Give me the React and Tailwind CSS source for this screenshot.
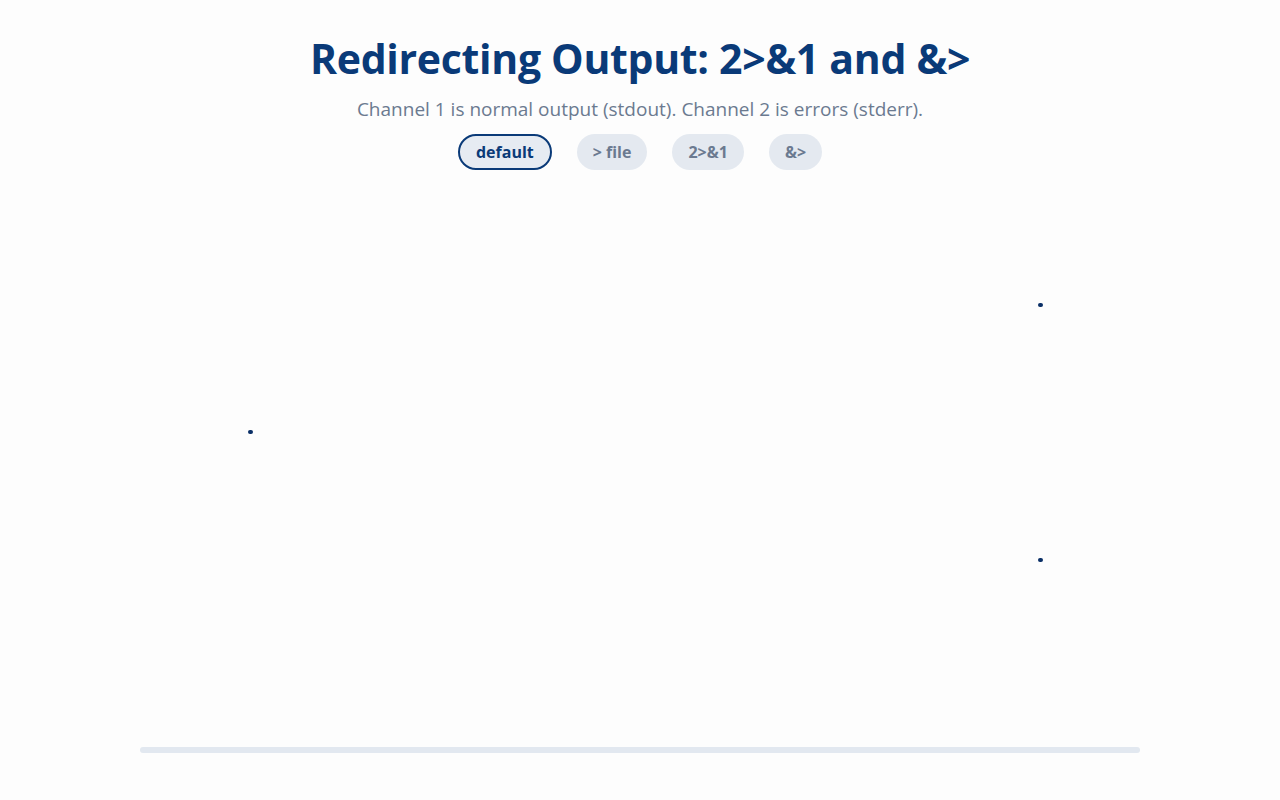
import React, { useState } from 'react';

const modes = ['default', '> file', '2>&1', '&>'];

// endpoints of the channel diagram, relative to the canvas
const nodes = [
  { id: 'out', left: 1038, top: 133 },
  { id: 'src', left: 248, top: 260 },
  { id: 'err', left: 1038, top: 388 },
];

const App = () => {
  const [mode, setMode] = useState('default');

  return (
    <div
      className="min-h-screen bg-[#fdfdfd] flex flex-col items-center"
      style={{ fontFamily: '"Open Sans", "Noto Sans", sans-serif' }}
    >
      <h1 className="mt-[30px] text-[41px] leading-[56px] font-bold text-[#0a3a78] tracking-[-0.3px]">
        Redirecting Output: 2&gt;&amp;1 and &amp;&gt;
      </h1>
      <p className="mt-[11px] text-[19px] leading-[24px] text-[#6b7a90]">
        Channel 1 is normal output (stdout). Channel 2 is errors (stderr).
      </p>
      <div className="mt-[13px] flex gap-[25px]">
        {modes.map(m => (
          <button
            key={m}
            onClick={() => setMode(m)}
            className={
              m === mode
                ? 'h-[36px] px-[16px] rounded-full border-2 border-[#0a3a78] bg-[#e6ebf2] text-[#0a3a78] text-[16px] font-bold'
                : 'h-[36px] px-[14px] rounded-full border-2 border-transparent bg-[#e4e9f0] text-[#6b7a90] text-[16px] font-bold'
            }
          >
            {m}
          </button>
        ))}
      </div>

      <div className="relative w-full h-[577px]">
        {nodes.map(n => (
          <span
            key={n.id}
            className="absolute w-[5px] h-[4px] rounded-full bg-[#0a2f66]"
            style={{ left: n.left, top: n.top }}
          />
        ))}
      </div>
      <div className="w-[1000px] h-[6px] rounded-full bg-[#e2e8f0]" />
    </div>
  );
};

export default App;
